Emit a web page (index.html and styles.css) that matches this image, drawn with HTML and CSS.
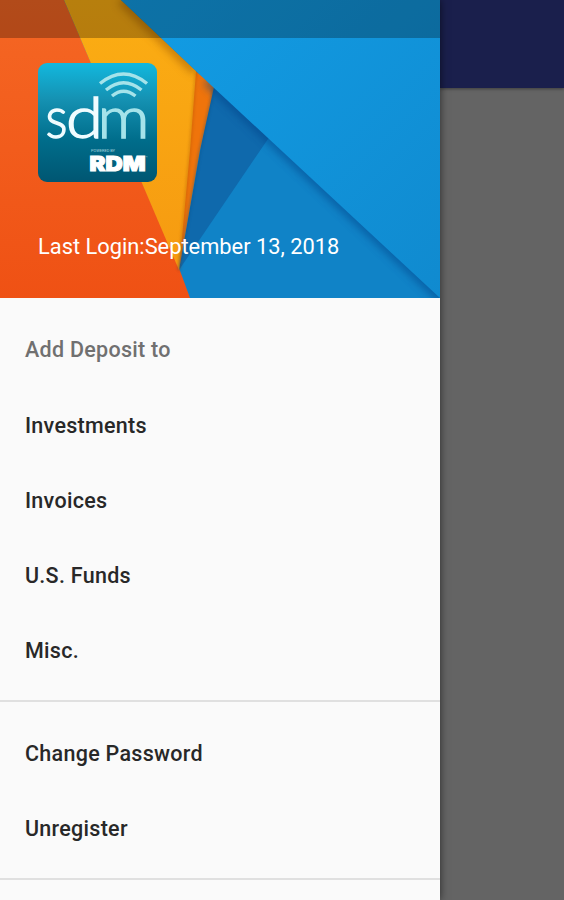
FILE: index.html
```
<!DOCTYPE html>
<html lang="en">
<head>
    <meta charset="utf-8">
    <title>SDM</title>
    <link rel="stylesheet" href="styles.css">
</head>
<body>
    <nav class="drawer">
        <header class="drawer-header">
            <svg class="header-art" viewBox="0 0 440 298" preserveAspectRatio="none">
                <defs>
                    <linearGradient id="orange" x1="0" y1="0" x2="0" y2="1">
                        <stop offset="0" stop-color="#f56724"/>
                        <stop offset="1" stop-color="#ef5114"/>
                    </linearGradient>
                    <linearGradient id="yellow" x1="0" y1="0" x2="0" y2="1">
                        <stop offset="0" stop-color="#fbae13"/>
                        <stop offset="1" stop-color="#f69a11"/>
                    </linearGradient>
                    <linearGradient id="sky" x1="0" y1="0" x2="1" y2="1">
                        <stop offset="0" stop-color="#129de5"/>
                        <stop offset="1" stop-color="#108acf"/>
                    </linearGradient>
                    <filter id="soft" x="-20%" y="-20%" width="140%" height="140%">
                        <feGaussianBlur stdDeviation="4"/>
                    </filter>
                    <filter id="softSmall" x="-50%" y="-20%" width="200%" height="140%">
                        <feGaussianBlur stdDeviation="1.5"/>
                    </filter>
                </defs>
                <rect width="440" height="298" fill="#1083c7"/>
                <path d="M213 80L270 136L179 270Z" fill="#0f69ac"/>
                <path d="M0 0H64L179 268L190 298H0Z" fill="url(#orange)"/>
                <path d="M190 66L214 87L200 150L179 270Z" fill="#ef740b"/>
                <path d="M64 0H121L196 71L190 150L179 270Z" fill="url(#yellow)"/>
                <path d="M196 71L190 150L179 270" fill="none" stroke="#a34c08" stroke-width="1.5" opacity=".55" filter="url(#softSmall)"/>
                <path d="M214 87L200 150L179 270" fill="none" stroke="#0a4478" stroke-width="1.5" opacity=".5" filter="url(#softSmall)"/>
                <path d="M121 0L196 71" stroke="#8a4a00" stroke-width="9" opacity=".5" filter="url(#soft)"/>
                <path d="M207 81L445 302" stroke="#063f86" stroke-width="8" opacity=".6" filter="url(#soft)"/>
                <path d="M121 0H440V298L213 87L196 71Z" fill="url(#sky)"/>
            </svg>
            <div class="statusbar"></div>
            <svg class="logo" viewBox="0 0 119 119">
                <defs>
                    <linearGradient id="teal" x1="0" y1="0" x2="0" y2="1">
                        <stop offset="0" stop-color="#12b8de"/>
                        <stop offset=".3" stop-color="#1592b3"/>
                        <stop offset=".65" stop-color="#006d8b"/>
                        <stop offset="1" stop-color="#005672"/>
                    </linearGradient>
                </defs>
                <rect width="119" height="119" rx="9" fill="url(#teal)"/>
                <g fill="none" stroke="#a5e3ea" stroke-width="3.4">
                    <path d="M62 20.5Q85.500 1.500 109 20.500"/>
                    <path d="M68 27Q85.500 12.500 103.500 27"/>
                    <path d="M74 33Q85.500 23.500 97.500 33"/>
                </g>
                <text class="logo-name" x="7.500" y="74.500" textLength="22" lengthAdjust="spacingAndGlyphs">s</text>
                <text class="logo-name" x="28" y="74.500" textLength="37" lengthAdjust="spacingAndGlyphs">d</text>
                <text class="logo-name logo-m" x="59.500" y="74.500" textLength="52" lengthAdjust="spacingAndGlyphs">m</text>
                <text class="logo-by" x="53" y="88.500" textLength="24" lengthAdjust="spacingAndGlyphs">POWERED BY</text>
                <text class="logo-rdm" x="51.500" y="108" textLength="56" lengthAdjust="spacingAndGlyphs">RDM</text>
                <text class="logo-by" x="107.500" y="96">™</text>
            </svg>
            <div class="last-login">Last Login:September 13, 2018</div>
        </header>
        <ul class="menu">
            <li class="title">Add Deposit to</li>
            <li>Investments</li>
            <li>Invoices</li>
            <li>U.S. Funds</li>
            <li>Misc.</li>
        </ul>
        <ul class="menu">
            <li>Change Password</li>
            <li>Unregister</li>
        </ul>
    </nav>
    <main class="page">
        <div class="toolbar"></div>
    </main>
</body>
</html>
```
FILE: styles.css
```
* {
    box-sizing: border-box;
}

body {
    display: flex;
    height: 900px;
    margin: 0;
    overflow: hidden;
    background-color: #646464;
    font-family: Roboto, Arial, sans-serif;
}

/* drawer */
.drawer {
    position: relative;
    z-index: 1;
    width: 440px;
    height: 900px;
    background-color: #fafafa;
    box-shadow: 0 0 8px rgba(0, 0, 0, 0.6);
}

.drawer-header {
    position: relative;
    height: 298px;
    padding: 62.5px 38px 0;
    overflow: hidden;
}

.header-art {
    position: absolute;
    top: 0;
    left: 0;
    width: 440px;
    height: 298px;
}

.statusbar {
    position: absolute;
    top: 0;
    left: 0;
    width: 100%;
    height: 38px;
    background-color: rgba(0, 0, 0, 0.27);
}

.logo {
    display: block;
    position: relative;
    width: 119px;
    height: 119px;
}

.logo-name {
    font-family: Lato, sans-serif;
    font-size: 57px;
    font-weight: 300;
    fill: #f0fcff;
    stroke: #f0fcff;
    stroke-width: 1.4px;
}

.logo-m {
    fill: #a5e3ea;
    stroke: #a5e3ea;
}

.logo-by {
    font-size: 3.5px;
    fill: #a5d5df;
}

.logo-rdm {
    font-family: Inter, sans-serif;
    font-size: 20.5px;
    font-weight: 900;
    fill: #ffffff;
    stroke: #ffffff;
    stroke-width: 1.1px;
}

.last-login {
    position: relative;
    margin-top: 50px;
    line-height: 30px;
    font-size: 21.85px;
    color: #ffffff;
    white-space: nowrap;
}

/* menu */
.menu {
    margin: 0;
    padding: 14.4px 25px 11.6px;
    list-style: none;
    border-bottom: 2px solid #e0e0e0;
}

.menu + .menu {
    padding: 13.6px 25px 12px;
}

.menu li {
    height: 75.2px;
    line-height: 75.2px;
    font-size: 21.5px;
    font-weight: 500;
    letter-spacing: 0.28px;
    color: #282828;
}

.menu .title {
    color: #707070;
}

/* page behind the drawer */
.page {
    flex: 1;
}

.toolbar {
    height: 88px;
    background-color: #1a1f4c;
    box-shadow: 0 1px 3px rgba(0, 0, 0, 0.4);
}
```
